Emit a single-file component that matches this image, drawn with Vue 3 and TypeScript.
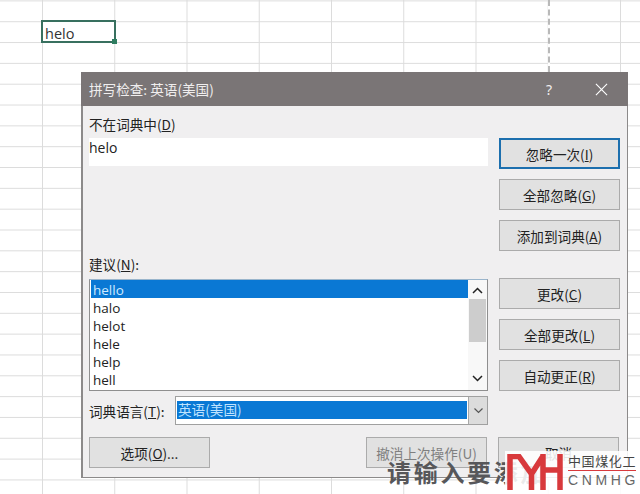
<script setup lang="ts">
const suggestions: string[] = ['hello', 'halo', 'helot', 'hele', 'help', 'hell']
</script>

<template>
  <div class="sheet">
    <div class="dash"></div>
    <div class="cell">helo<span class="handle"></span></div>

    <div class="dialog">
      <header class="title">
        <span class="title-text">拼写检查: 英语(美国)</span>
        <span class="help">?</span>
        <svg class="close" width="14" height="14" viewBox="0 0 14 14">
          <path d="M1 1L13 13M13 1L1 13" stroke="#fff" stroke-width="1.2" fill="none" />
        </svg>
      </header>
      <div class="body">
        <div class="top">
          <div class="left">
            <div class="label first">不在词典中(<u>D</u>)</div>
            <div class="word">helo</div>
            <div class="label second">建议(<u>N</u>):</div>
            <div class="listbox">
              <ul class="items">
                <li v-for="(s, i) in suggestions" :key="s" :class="{ sel: i === 0 }">{{ s }}</li>
              </ul>
              <div class="scroll">
                <svg class="arrow" width="11" height="7" viewBox="0 0 11 7"><path d="M1 6L5.5 1.5L10 6" stroke="#222" stroke-width="1.5" fill="none" /></svg>
                <div class="track"><div class="thumb"></div></div>
                <svg class="arrow" width="11" height="7" viewBox="0 0 11 7"><path d="M1 1L5.5 5.5L10 1" stroke="#222" stroke-width="1.5" fill="none" /></svg>
              </div>
            </div>
            <div class="lang-row">
              <span class="lang-label">词典语言(<u>T</u>):</span>
              <div class="combo">
                <div class="combo-value"><span>英语(美国)</span></div>
                <div class="combo-btn">
                  <svg width="11" height="7" viewBox="0 0 11 7"><path d="M1.5 1.5L5.5 5.5L9.5 1.5" stroke="#555" stroke-width="1.2" fill="none" /></svg>
                </div>
              </div>
            </div>
          </div>
          <div class="right">
            <button class="btn primary">忽略一次(<u>I</u>)</button>
            <button class="btn">全部忽略(<u>G</u>)</button>
            <button class="btn">添加到词典(<u>A</u>)</button>
            <button class="btn gap-top">更改(<u>C</u>)</button>
            <button class="btn">全部更改(<u>L</u>)</button>
            <button class="btn">自动更正(<u>R</u>)</button>
          </div>
        </div>
        <div class="bottom">
          <button class="btn options">选项(<u>O</u>)...</button>
          <button class="btn undo">撤消上次操作(U)</button>
          <button class="btn cancel">取消</button>
        </div>
      </div>
    </div>

    <div class="wm-text">请输入要添加</div>
    <div class="logo">
      <svg class="logo-mark" width="56" height="36" viewBox="0 0 56 36">
        <path d="M3 36V2.5H12L24.5 20L36 2M24.5 20V36M36 36V0M53 36V0M36 16H53" stroke="#d8393c" stroke-width="5.5" fill="none" />
      </svg>
      <div class="logo-text">
        <div class="logo-cn">中国煤化工</div>
        <div class="logo-en">CNMHG</div>
      </div>
    </div>
  </div>
</template>

<style>
html, body { margin: 0; padding: 0; background: #fff; }
</style>

<style scoped>
.sheet {
  position: relative;
  width: 640px;
  height: 494px;
  overflow: hidden;
  background-color: #fff;
  background-image:
    linear-gradient(to right, #dcdcdc 1.3px, transparent 1.3px),
    linear-gradient(to bottom, #dcdcdc 1.3px, transparent 1.3px);
  background-size: 72.25px 20.84px;
  background-position: 42px 0, 0 0.4px;
  font-family: "Noto Sans CJK SC", "Noto Sans", sans-serif;
  color: #222;
}
.dash {
  position: absolute;
  left: 548px;
  top: 0;
  width: 0;
  height: 72px;
  border-left: 2px dashed #b9b9b9;
  background: #fff;
}
.cell {
  position: absolute;
  left: 41px;
  top: 20px;
  width: 71px;
  height: 19px;
  border: 2px solid #38705f;
  background: #fff;
  font: 14.5px/23px "Open Sans", "Noto Sans", sans-serif;
  text-indent: 2px;
  color: #333;
}
.handle {
  position: absolute;
  right: -3px;
  bottom: -3px;
  width: 5px;
  height: 5px;
  background: #2e7d60;
}
.dialog {
  position: absolute;
  left: 81px;
  top: 72px;
  width: 547px;
  height: 406px;
  box-sizing: border-box;
  background: #f0eff0;
  border: 1px solid #8c8a8a;
  border-left-width: 2px;
  border-top: 0;
  display: flex;
  flex-direction: column;
}
.title {
  height: 34px;
  flex: none;
  margin: 0 -1px 0 -2px;
  background: #7a7576;
  color: #f0eeee;
  display: flex;
  align-items: center;
  padding: 0 20px 0 8px;
  font-size: 13.6px;
}
.title-text { flex: 1; }
.help { font: 14px "Noto Sans", sans-serif; margin-right: 43px; }
.close { width: 13px; height: 13px; }
.body {
  flex: 1;
  min-height: 0;
  padding: 0 7px 0 6px;
  display: flex;
  flex-direction: column;
}
.top { display: flex; gap: 11px; height: 330px; flex: none; }
.left { width: 399px; flex: none; display: flex; flex-direction: column; }
.label { font-size: 13.6px; line-height: 20px; color: #222; }
.first { margin-top: 8px; }
.word {
  height: 28px;
  margin-top: 4px;
  background: #fff;
  font: 14px/19px "Open Sans", "Noto Sans", sans-serif;
}
.second { margin-top: 88px; }
.listbox {
  height: 112px;
  margin-top: 5px;
  box-sizing: border-box;
  border: 1px solid #8f8f8f;
  border-top-color: #9ab5cc;
  background: #fff;
  display: flex;
}
.items {
  list-style: none;
  margin: 0;
  padding: 0 0 0 1px;
  flex: 1;
  min-width: 0;
}
.items li {
  height: 18px;
  padding-left: 2px;
  font: 13.5px/21px "Open Sans", "Noto Sans", sans-serif;
  color: #222;
}
.items li.sel { background: #0a78d4; color: #cfeaff; }
.scroll {
  width: 19px;
  flex: none;
  display: flex;
  flex-direction: column;
  align-items: center;
  background: #f8f8f8;
  padding: 7px 0 3px;
  box-sizing: border-box;
}
.track { flex: 1; width: 100%; padding: 0 1px; box-sizing: border-box; }
.thumb { height: 43px; background: #cdcdcd; }
.scroll .arrow { flex: none; margin-bottom: 5px; }
.lang-row { display: flex; align-items: center; margin-top: 5px; height: 29px; }
.lang-label { width: 86px; flex: none; font-size: 13.6px; }
.combo {
  width: 313px;
  height: 29px;
  box-sizing: border-box;
  border: 1px solid #a0a0a0;
  background: #fff;
  display: flex;
}
.combo-value { flex: 1; padding: 4px 1px; }
.combo-value span {
  display: block;
  height: 18px;
  line-height: 17px;
  background: #0a78d4;
  color: #bfe3ff;
  font-size: 13.6px;
  padding-left: 1px;
}
.combo-btn {
  width: 18px;
  flex: none;
  background: #dcdcdc;
  border-left: 1px solid #a8a8a8;
  display: flex;
  align-items: center;
  justify-content: center;
}
.right { width: 121px; flex: none; display: flex; flex-direction: column; gap: 10px; padding-top: 32px; }
.btn {
  height: 31px;
  box-sizing: border-box;
  background: #e1e1e1;
  border: 1px solid #ababab;
  border-radius: 0;
  padding: 0;
  font-family: inherit;
  font-size: 13.6px;
  color: #222;
}
.right .btn { width: 121px; flex: none; }
.primary { border: 2px solid #1c6fae; }
.gap-top { margin-top: 17px; }
.bottom { display: flex; margin-top: 1px; }
.options { width: 121px; }
.undo { width: 121px; margin-left: 156px; color: #7f7f7f; }
.cancel { width: 121px; margin-left: 11px; }
.wm-text {
  position: absolute;
  left: 387px;
  top: 457px;
  font-size: 24px;
  line-height: 30px;
  font-weight: 700;
  letter-spacing: 2.7px;
  color: #57575a;
  white-space: nowrap;
}
.logo {
  position: absolute;
  left: 505px;
  top: 451px;
  width: 135px;
  height: 43px;
  box-sizing: border-box;
  padding: 1px 0 4px 2px;
  background: rgba(255, 255, 255, 0.88);
  display: flex;
  align-items: flex-start;
}
.logo-mark { flex: none; margin-top: 2px; }
.logo-text { margin-left: 5px; width: 68px; }
.logo-cn {
  font-size: 13px;
  line-height: 18px;
  letter-spacing: 0.6px;
  white-space: nowrap;
  color: #444;
  border-bottom: 1px solid #d8393c;
}
.logo-en {
  font: 14px/18px "Liberation Sans", sans-serif;
  letter-spacing: 3.6px;
  color: #666;
  white-space: nowrap;
}
</style>
